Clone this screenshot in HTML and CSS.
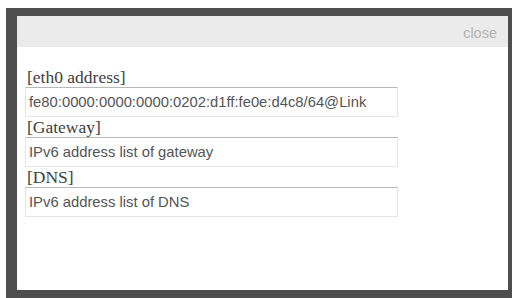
FILE: index.html
```html
<!DOCTYPE html>
<html>
<head>
<meta charset="utf-8">
<link rel="stylesheet" href="styles.css">
</head>
<body>
<div class="overlay">
  <div class="dialog">
    <div class="header"><span class="close">close</span></div>
    <div class="content">
      <div class="label">[eth0 address]</div>
      <div class="field">fe80:0000:0000:0000:0202:d1ff:fe0e:d4c8/64@Link</div>
      <div class="label">[Gateway]</div>
      <div class="field">IPv6 address list of gateway</div>
      <div class="label">[DNS]</div>
      <div class="field">IPv6 address list of DNS</div>
    </div>
  </div>
</div>
</body>
</html>
```
FILE: styles.css
```css
html, body {
  margin: 0;
  padding: 0;
  background: #ffffff;
  overflow: hidden;
}
body {
  width: 515px;
  height: 298px;
  padding: 8px 0 0 6px;
  box-sizing: border-box;
}
.overlay {
  width: 506px;
  height: 290px;
  box-sizing: border-box;
  background: #4e4e4e;
  padding: 8px 4px 0 11px;
}
.dialog {
  width: 491px;
  height: 274px;
  background: #ffffff;
  display: flex;
  flex-direction: column;
}
.header {
  height: 31px;
  background: #ebebeb;
  display: flex;
  align-items: center;
  justify-content: flex-end;
  padding-right: 11px;
}
.close {
  font-family: "Liberation Sans", Arial, sans-serif;
  font-size: 14.5px;
  color: #b3b3b3;
  margin-top: 2px;
}
.content {
  padding: 20px 0 0 8px;
}
.label {
  font-family: "Liberation Serif", "Times New Roman", serif;
  font-size: 17.5px;
  line-height: 20px;
  height: 20px;
  color: #404040;
  padding-left: 2px;
}
.field {
  width: 373px;
  height: 30px;
  box-sizing: border-box;
  border: 1px solid #e6e6e6;
  border-top-color: #b9b9b9;
  padding-left: 3px;
  font-family: "Liberation Sans", Arial, sans-serif;
  font-size: 14.8px;
  line-height: 28px;
  color: #555555;
  white-space: nowrap;
  overflow: hidden;
}
```
